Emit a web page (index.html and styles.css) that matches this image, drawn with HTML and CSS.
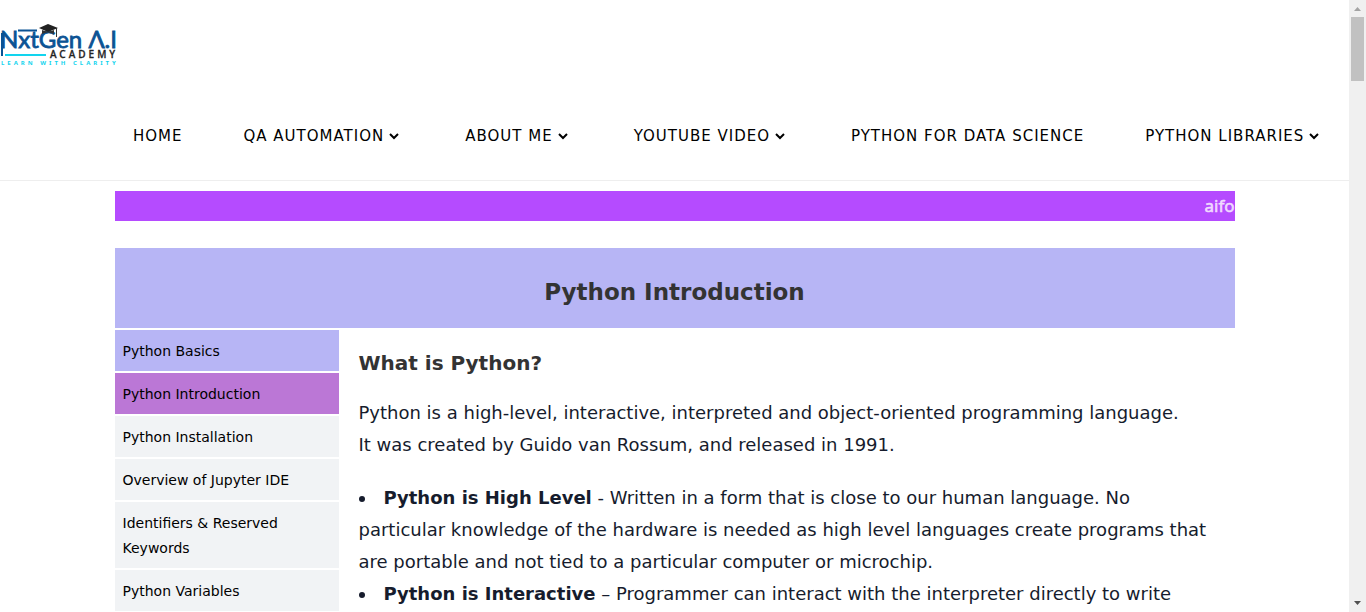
FILE: index.html
```
<!DOCTYPE html>
<html lang="en">
<head>
<meta charset="utf-8">
<title>Python Introduction - NxtGen A.I Academy</title>
<link rel="stylesheet" href="styles.css">
</head>
<body>
<div class="window">
  <div class="page">
    <header class="site-header">
      <a class="logo" href="#" aria-label="NxtGen A.I Academy">
        <svg width="120" height="44" viewBox="0 0 120 44">
          <text class="logo-name" x="0" y="24">NxtGen Λ.I</text>
          <path d="M2 9V32M18 6.500H37" stroke="#0b5394" stroke-width="2" fill="none"/>
          <path d="M39 4 48 0 58 4 48 8Z" fill="#222"/>
          <path d="M42 6v4q6-3 12 0V6l-6 2Z" fill="#333"/>
          <path d="M56.500 4v9" stroke="#333"/>
          <path d="M5 31H46" stroke="#12d4ee" stroke-width="2"/>
          <text class="logo-academy" x="50" y="34">ACADEMY</text>
          <text class="logo-tag" x="1" y="41">LEARN WITH CLARITY</text>
        </svg>
      </a>
      <nav class="nav">
        <a class="nav-link" href="#">HOME</a>
        <a class="nav-link" href="#">QA AUTOMATION<svg class="chevron" viewBox="0 0 10 8"><path d="M1 2 5 6 9 2"/></svg></a>
        <a class="nav-link" href="#">ABOUT ME<svg class="chevron" viewBox="0 0 10 8"><path d="M1 2 5 6 9 2"/></svg></a>
        <a class="nav-link" href="#">YOUTUBE VIDEO<svg class="chevron" viewBox="0 0 10 8"><path d="M1 2 5 6 9 2"/></svg></a>
        <a class="nav-link" href="#">PYTHON FOR DATA SCIENCE</a>
        <a class="nav-link" href="#">PYTHON LIBRARIES<svg class="chevron" viewBox="0 0 10 8"><path d="M1 2 5 6 9 2"/></svg></a>
      </nav>
    </header>
    <div class="container">
      <div class="ticker"><span class="ticker-text">aifo</span></div>
      <div class="banner"><h1 class="banner-title">Python Introduction</h1></div>
      <div class="columns">
        <nav class="sidebar">
          <a class="side-link side-heading" href="#">Python Basics</a>
          <a class="side-link side-active" href="#">Python Introduction</a>
          <a class="side-link" href="#">Python Installation</a>
          <a class="side-link" href="#">Overview of Jupyter IDE</a>
          <a class="side-link" href="#">Identifiers &amp; Reserved Keywords</a>
          <a class="side-link" href="#">Python Variables</a>
        </nav>
        <main class="content">
          <h2 class="content-title">What is Python?</h2>
          <p class="intro">Python is a high-level, interactive, interpreted and object-oriented programming language.<br>It was created by Guido van Rossum, and released in 1991.</p>
          <ul class="features">
            <li><strong>Python is High Level</strong> - Written in a form that is close to our human language. No particular knowledge of the hardware is needed as high level languages create programs that are portable and not tied to a particular computer or microchip.</li>
            <li><strong>Python is Interactive</strong> – Programmer can interact with the interpreter directly to write</li>
          </ul>
        </main>
      </div>
    </div>
  </div>
  <div class="scrollbar" aria-hidden="true">
    <svg class="arrow" viewBox="0 0 17 17"><path d="M5 11 8.500 7 12 11Z" fill="#a3a3a3"/></svg>
    <div class="thumb"></div>
    <svg class="arrow" viewBox="0 0 17 17"><path d="M5 6H12L8.500 10Z" fill="#505050"/></svg>
  </div>
</div>
</body>
</html>
```
FILE: styles.css
```
* { box-sizing: border-box; }
body {
  margin: 0;
  background: #fff;
  color: #161c2d;
  font-family: Verdana, "DejaVu Sans", sans-serif;
}
a { color: inherit; text-decoration: none; }
.window { display: flex; height: 100vh; overflow: hidden; }
.page { flex: 1; min-width: 0; overflow: hidden; }

.site-header { border-bottom: 1px solid #eee; padding: 24px 0 31px; }
.logo { display: block; height: 44px; }
.logo svg { display: block; }
.logo-name { font: 24px Lato, sans-serif; fill: #0b5394; stroke: #0b5394; stroke-width: 0.8px; }
.logo-academy { font: 500 10px "Noto Sans", sans-serif; letter-spacing: 3px; fill: #222; stroke: #222; stroke-width: 0.3px; }
.logo-tag { font: bold 6px "Noto Sans", sans-serif; letter-spacing: 3px; fill: #12d4ee; }

.nav { display: flex; gap: 61px; padding: 55px 0 0 133px; }
.nav-link { display: flex; align-items: center; white-space: nowrap; color: #000; font-size: 15px; line-height: 26px; letter-spacing: 1px; }
.chevron { width: 10px; height: 8px; margin: 0 5px; fill: none; stroke: #000; stroke-width: 2; }

.container { width: 100%; max-width: 1120px; margin: 0 auto; padding-top: 10px; }
.ticker { height: 30px; margin-bottom: 27px; background: #b54bff; overflow: hidden; white-space: nowrap; }
.ticker-text { display: block; margin-left: calc(100% - 30px); color: #f0daff; font: 17px/30px "Noto Sans", sans-serif; -webkit-text-stroke: 0.6px #f0daff; }
.banner { margin-bottom: 2px; padding: 28px 0 20px; background: #b7b5f5; text-align: center; }
.banner-title { margin: 0; color: #333; font-size: 23px; line-height: 32px; }

.columns { display: flex; }
.sidebar { display: flex; flex-direction: column; gap: 2px; width: 20%; }
.side-link { padding: 9px 8px 7px; background: #f1f3f5; color: #000; font-size: 14px; line-height: 25px; }
.side-heading { background: #b7b5f5; }
.side-active { background: #bb77d6; }
.content { flex: 1; padding: 17px 20px; }
.content-title { margin: 0 0 18px; color: #333; font-size: 20px; line-height: 32px; }
.intro { margin: 0 0 21px; font-size: 18px; line-height: 32px; }
.features { margin: 0; padding: 0; font-size: 18px; line-height: 32px; list-style-position: inside; }

.scrollbar { display: flex; flex-direction: column; width: 17px; background: #f0f0f0; }
.arrow { width: 17px; height: 17px; }
.thumb { height: 64px; margin: 0 2px auto; background: #c1c1c1; }
```
